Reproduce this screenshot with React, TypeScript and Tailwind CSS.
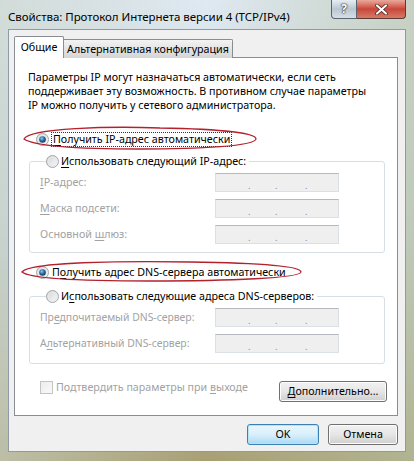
import React from "react";

function Radio({ checked }: { checked?: boolean }) {
  return (
    <svg width="13" height="13" viewBox="0 0 13 13" className="shrink-0">
      <defs>
        <linearGradient id={checked ? "rgc" : "rgu"} x1="0" y1="0" x2="1" y2="1">
          <stop offset="0" stopColor="#d2d4d6" />
          <stop offset="1" stopColor="#fbfbfb" />
        </linearGradient>
        <radialGradient id="rdot" cx="0.4" cy="0.35" r="0.7">
          <stop offset="0" stopColor="#8ad0f2" />
          <stop offset="0.5" stopColor="#2a6fa6" />
          <stop offset="1" stopColor="#0e2f4e" />
        </radialGradient>
      </defs>
      <circle cx="6.5" cy="6.5" r="6" fill={checked ? "url(#rgc)" : "url(#rgu)"} stroke="#a3a6a9" strokeWidth="1" />
      <circle cx="6.5" cy="6.5" r="4.3" fill="none" stroke="#e9eaeb" strokeWidth="1" />
      {checked && <circle cx="6.5" cy="6.5" r="3.3" fill="url(#rdot)" />}
    </svg>
  );
}

function IpField() {
  return (
    <div className="w-[124px] h-[19px] bg-[#efefef] border border-[#dbdfe6] border-t-[#b5b8bf] flex items-center">
      <div className="flex w-full pl-[32px] pt-[6px] text-[#8a8a8a] text-[9px] leading-none">
        <span className="w-[27px]">.</span>
        <span className="w-[30px]">.</span>
        <span>.</span>
      </div>
    </div>
  );
}

function U({ children }: { children: React.ReactNode }) {
  return <span className="underline underline-offset-[2px] decoration-[1px]">{children}</span>;
}

function WinButton({ children, def, className = "" }: { children: React.ReactNode; def?: boolean; className?: string }) {
  return (
    <div
      className={
        "relative flex items-center justify-center h-[21px] rounded-[3px] border text-[10.7px] text-black overflow-hidden " +
        (def
          ? "border-[#3c7fb1] bg-gradient-to-b from-[#eaf6fd] via-[#d9f0fc] to-[#a9d9f4] shadow-[inset_0_0_0_1px_#b6e3f8] "
          : "border-[#707070] bg-gradient-to-b from-[#f2f2f2] via-[#e6e6e6] to-[#cfcfcf] shadow-[inset_0_0_0_1px_#fcfcfc] ") +
        className
      }
    >
      <span className="relative">{children}</span>
    </div>
  );
}

function Ellipses() {
  return (
    <svg className="absolute left-0 top-0 pointer-events-none" width="414" height="461" viewBox="0 0 414 461">
      <path
        d="M24 139 C 30 128, 110 126, 160 128 C 220 129, 256 133, 256 139 C 255 146, 200 149, 140 149 C 80 149, 34 146, 24 139 Z"
        fill="none"
        stroke="#b3202e"
        strokeWidth="1.3"
      />
      <path
        d="M22 272 C 30 262, 120 261, 190 262 C 260 263, 301 266, 301 272 C 300 278, 230 281, 150 281 C 80 281, 30 279, 22 272 Z"
        fill="none"
        stroke="#b3202e"
        strokeWidth="1.3"
      />
    </svg>
  );
}

function Row({ label, size = "text-[10.7px]" }: { label: React.ReactNode; size?: string }) {
  return (
    <div className="flex items-center h-[19px]">
      <span className={"w-[175px] text-[#a2a2a2] " + size}>{label}</span>
      <IpField />
    </div>
  );
}

export default function App() {
  return (
    <div className="relative w-[414px] h-[461px] overflow-hidden font-['Noto_Sans',sans-serif] text-black bg-gradient-to-b from-[#dfe9f2] via-[#c8d4d8] to-[#a89f72]">
      <div className="absolute inset-0 bg-gradient-to-r from-[#c9d3c8]/60 via-transparent to-[#b7c2a5]/60" />
      <div className="relative h-[29px] flex items-start justify-between pl-[8px] pr-[8px]">
        <div className="pt-[9px] text-[11.5px] leading-[16px] tracking-[-0.05px]">Свойства: Протокол Интернета версии 4 (TCP/IPv4)</div>
        <div className="flex h-[19px]">
          <div className="w-[26px] h-[19px] rounded-bl-[4px] border border-t-0 border-[#5a6470] bg-gradient-to-b from-[#e6eef4] via-[#b9c7d3] to-[#d5dfe7] flex items-center justify-center">
            <span className="text-[12px] font-bold text-white leading-none [text-shadow:0_0_1px_#333,0_0_1px_#333,0_0_2px_#333]">?</span>
          </div>
          <div className="w-[49px] h-[19px] rounded-br-[4px] border border-t-0 border-l-0 border-[#5a3a36] bg-gradient-to-b from-[#e9a99b] via-[#c7463a] to-[#d77a66] flex items-center justify-center">
            <svg width="13" height="11" viewBox="0 0 13 11">
              <path d="M2 1.5 L11 9.5 M11 1.5 L2 9.5" stroke="#4a1a16" strokeWidth="3.6" strokeLinecap="round" />
              <path d="M2 1.5 L11 9.5 M11 1.5 L2 9.5" stroke="#ffffff" strokeWidth="2.2" strokeLinecap="round" />
            </svg>
          </div>
        </div>
      </div>

      <div className="relative mx-[8px] h-[423px] bg-[#f0f0f0] border border-[#8e9aa6] flex flex-col pl-[5px] pr-[8px] pt-[6px]">
        <div className="flex items-end h-[22px] relative z-10">
          <div className="w-[50px] h-[22px] bg-white border border-b-0 border-[#898c95] rounded-t-[2px] flex items-center justify-center pb-[1px] text-[10.7px]">
            Общие
          </div>
          <div className="w-[170px] h-[19px] -ml-[1px] border border-b-0 border-[#898c95] rounded-tr-[2px] bg-gradient-to-b from-[#f3f3f3] via-[#e4e4e4] to-[#d5d5d5] flex items-center justify-center text-[10.7px]">
            Альтернативная конфигурация
          </div>
        </div>
        <div className="-mt-[1px] w-[384px] h-[359px] bg-white border border-[#898c95] flex flex-col pl-[13px] pr-[10px] pt-[12px]">
          <p className="text-[10.7px] leading-[14px]">
            Параметры IP могут назначаться автоматически, если сеть
            <br />
            поддерживает эту возможность. В противном случае параметры
            <br />
            IP можно получить у сетевого администратора.
          </p>

          <div className="mt-[18px] h-[18px] flex items-center pl-[8px] gap-[1px]">
            <Radio checked />
            <span className="ml-[1px] px-[1px] border border-dotted border-[#333] text-[10.7px] leading-[13px]">
              <U>П</U>олучить IP-адрес автоматически
            </span>
          </div>

          <fieldset className="mt-[4px] ml-[1px] w-[356px] h-[101px] border border-[#d5dfe5] rounded-[3px] pl-[10px] pr-[10px]">
            <legend className="ml-[6px] h-[18px] flex items-center gap-[2px] pr-[3px]">
              <Radio />
              <span className="text-[10.7px]">
                <U>И</U>спользовать следующий IP-адрес:
              </span>
            </legend>
            <div className="flex flex-col gap-[7px] pt-[3px]">
              <Row label={<><U>I</U>P-адрес:</>} />
              <Row label={<><U>М</U>аска подсети:</>} />
              <Row label={<>Основной <U>ш</U>люз:</>} />
            </div>
          </fieldset>

          <div className="mt-[10px] h-[18px] flex items-center pl-[8px] gap-[2px]">
            <Radio checked />
            <span className="text-[10.7px] leading-[13px] ml-[1px]">
              П<U>о</U>лучить адрес DNS-сервера автоматически
            </span>
          </div>

          <fieldset className="mt-[6px] ml-[1px] w-[356px] h-[77px] border border-[#d5dfe5] rounded-[3px] pl-[10px] pr-[10px]">
            <legend className="ml-[6px] h-[18px] flex items-center gap-[2px] pr-[3px]">
              <Radio />
              <span className="text-[10.7px]">
                И<U>с</U>пользовать следующие адреса DNS-серверов:
              </span>
            </legend>
            <div className="flex flex-col gap-[7px] pt-[3px]">
              <Row size="text-[10.4px]" label={<>Пр<U>е</U>дпочитаемый DNS-сервер:</>} />
              <Row size="text-[10.4px]" label={<>А<U>л</U>ьтернативный DNS-сервер:</>} />
            </div>
          </fieldset>

          <div className="mt-[17px] flex items-start justify-between pl-[12px]">
            <div className="flex items-center gap-[3px] h-[13px]">
              <div className="w-[13px] h-[13px] border border-[#c4c4c4] bg-gradient-to-br from-[#ececec] to-[#fafafa]" />
              <span className="text-[10.7px] text-[#a2a2a2]">
                Подтвердить параметры при <U>в</U>ыходе
              </span>
            </div>
            <WinButton className="w-[108px]">
              <U>Д</U>ополнительно...
            </WinButton>
          </div>
        </div>

        <div className="flex justify-end gap-[9px] mt-[8px] w-[384px]">
          <WinButton def className="w-[72px]">OK</WinButton>
          <WinButton className="w-[70px]">Отмена</WinButton>
        </div>
      </div>

      <Ellipses />
    </div>
  );
}
